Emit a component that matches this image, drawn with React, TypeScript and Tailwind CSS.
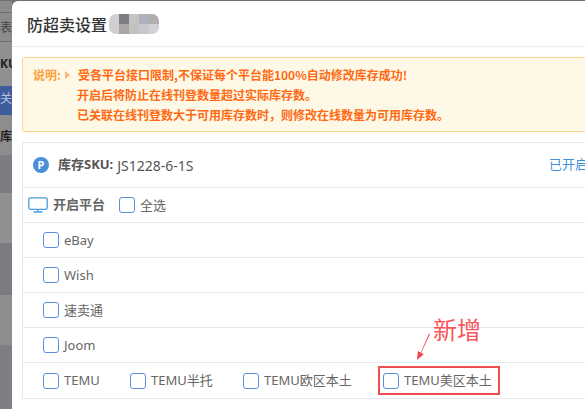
const sans = "font-['Noto_Sans','Noto_Sans_CJK_SC','Liberation_Sans',sans-serif]";
const cjk = "font-['Noto_Sans_CJK_SC','Liberation_Sans',sans-serif]";

const Box = () => (
  <span className="w-[16px] h-[16px] shrink-0 rounded-[3px] border border-[#5b8fe0] bg-white" />
);

const Check = ({ label, className = "" }: { label: string; className?: string }) => (
  <label className={`flex items-center gap-[5px] text-[13px] text-[#666] ${className}`}>
    <Box />
    <span className="pt-[1px]">{label}</span>
  </label>
);

const Row = ({ children }: { children: React.ReactNode }) => (
  <div className="h-[35px] flex items-center pl-[20px] border-t border-[#e6e8f0]">{children}</div>
);

const Backdrop = () => (
  <div className="w-[12px] shrink-0 flex flex-col text-[12px] font-bold text-[#222] overflow-hidden">
    <div className="h-[12px] bg-[#8b8b8d] border-b border-[#6f7072]" />
    <div className="h-[29px] bg-[#8b8b8d] border-b border-[#6f7072] pt-[6px] font-normal text-[#444] whitespace-nowrap">表</div>
    <div className="h-[44px] bg-[#909092] pt-[13px] whitespace-nowrap">KU</div>
    <div className="h-[29px] bg-[#3f5c9c] text-[#b9c3dc] font-normal pt-[4px] whitespace-nowrap">关联</div>
    <div className="h-[40px] bg-[#8d8d8f] pt-[13px] whitespace-nowrap">库:</div>
    <div className="h-[38px] bg-[#7c7d80]" />
    <div className="h-[50px] bg-[#909090]" />
    <div className="h-[52px] bg-[#7a7c82]" />
    <div className="h-[50px] bg-[#8e8e8e]" />
    <div className="flex-1 bg-[#7d7f84]" />
  </div>
);

const mosaic = [
  "bg-[#d0d0d4]", "bg-[#7f7d80]", "bg-[#c4c4c2]", "bg-[#aeb2bc]", "bg-[#b4adad]",
  "bg-[#cfcfd2]", "bg-[#aaa6a8]", "bg-[#c2c2c0]", "bg-[#c6c8ce]", "bg-[#d4d2d4]",
];

export default function App() {
  return (
    <div className={`relative w-[585px] h-[409px] overflow-hidden flex flex-col bg-[#6f7072] ${sans}`}>
      <div className="flex flex-1 min-h-0 pt-[1px]">
        <Backdrop />
        <div className="flex-1 min-w-0 bg-white rounded-tl-[6px] overflow-hidden">
          <div className="h-[46px] flex items-center pl-[15px] border-b border-[#eeeeee]">
            <h1 className={`text-[16px] leading-[20px] text-[#333] font-medium ${cjk}`}>防超卖设置</h1>
            <span className="ml-[2px] w-[50px] h-[20px] rounded-[7px] overflow-hidden grid grid-cols-5 blur-[0.6px]">
              {mosaic.map((c, i) => (
                <span key={i} className={c} />
              ))}
            </span>
          </div>
          <div className="pl-[10px] pt-[10px]">
            <div className={`h-[75px] w-[600px] border border-[#fdd38a] rounded-[3px] bg-[#fef8e6] flex pl-[10px] pt-[7px] text-[12px] leading-[20px] font-bold text-[#ff6a13] ${cjk}`}>
              <span className="w-[30px] shrink-0 text-[#fd9f3c]">说明:</span>
              <span className="w-0 h-0 mt-[6px] ml-[2px] mr-[8px] border-y-[4px] border-y-transparent border-l-[5px] border-l-[#fbb67a]" />
              <div className="whitespace-nowrap">
                <div>受各平台接口限制,不保证每个平台能100%自动修改库存成功!</div>
                <div className="ml-[-1px]">开启后将防止在线刊登数量超过实际库存数。</div>
                <div className="ml-[-1px]">{"已关联在线刊登数大于可用库存数时\uFF0C则修改在线数量为可用库存数。"}</div>
              </div>
            </div>
            <div className="mt-[10px] w-[600px] border-l border-t border-[#e6e8f0]">
              <div className="h-[44px] flex items-center pl-[10px] pr-[34px] text-[13px] text-[#555]">
                <span className="w-[16px] h-[16px] rounded-full bg-[#4a90d9] text-white text-[11px] font-bold flex items-center justify-center">P</span>
                <span className="ml-[9px] font-bold">库存SKU:</span>
                <span className="ml-[4px] text-[14px]">JS1228-6-1S</span>
                <span className="ml-auto text-[#3f8fdc] whitespace-nowrap">已开启</span>
              </div>
              <div className="h-[35px] flex items-center pl-[5px] border-t border-[#e6e8f0]">
                <svg width="20" height="16" viewBox="0 0 20 16" fill="none" stroke="#4a9ad8" strokeWidth="1.3">
                  <rect x="0.8" y="0.8" width="18.4" height="11.5" rx="1.5" />
                  <path d="M10 12.5v2M5.5 15h9" />
                </svg>
                <span className="ml-[5px] text-[13px] font-bold text-[#666]">开启平台</span>
                <Check label="全选" className="ml-[14px]" />
              </div>
              <Row><Check label="eBay" /></Row>
              <Row><Check label="Wish" /></Row>
              <Row><Check label="速卖通" /></Row>
              <Row><Check label="Joom" /></Row>
              <div className="h-[37px] flex items-center pl-[20px] border-t border-b border-[#e6e8f0] relative">
                <Check label="TEMU" className="w-[87px]" />
                <Check label="TEMU半托" className="w-[113px]" />
                <Check label="TEMU欧区本土" className="w-[140px]" />
                <Check label="TEMU美区本土" />
                <span className="absolute left-[355px] top-[3px] w-[122px] h-[29px] border-2 border-[#f04f52]" />
              </div>
            </div>
          </div>
        </div>
      </div>
      <span className={`absolute left-[433px] top-[314px] text-[24px] leading-[30px] text-[#f9565c] ${cjk}`}>新增</span>
      <svg className="absolute left-[415px] top-[332px]" width="18" height="30" viewBox="0 0 18 30" fill="#f0474f">
        <path d="M14 1.5 5.8 20.5l-3-1.5L2 28l6.8-5.8-2.6-1.2L15 2z" />
      </svg>
    </div>
  );
}
